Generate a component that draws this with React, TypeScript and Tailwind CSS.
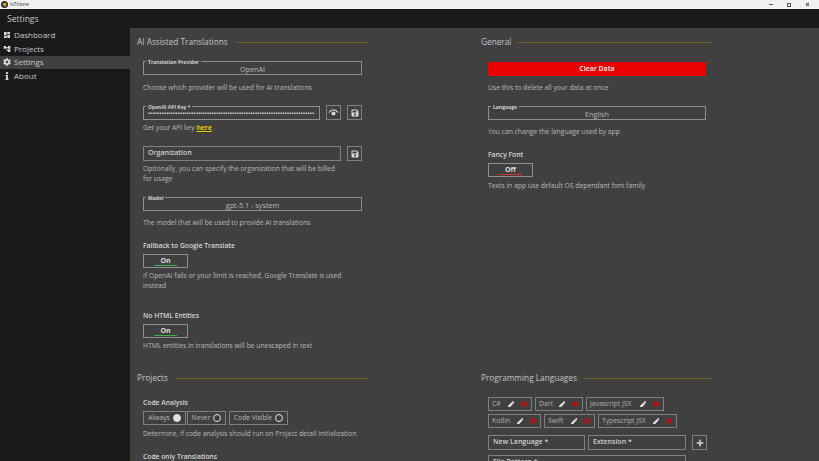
import React from "react";
import { FaCog, FaInfo, FaPen, FaPlus, FaSave, FaTimes } from "react-icons/fa";
import { MdAccountTree, MdDashboard } from "react-icons/md";

const font = "font-['Open_Sans',sans-serif]";

const SideItem = ({ icon, label, active }: { icon: React.ReactNode; label: string; active?: boolean }) => (
  <div className={`flex h-[13.75px] items-center gap-[3px] pl-[3px] text-[8px] text-[#c8c8c8] ${active ? "bg-[#404040]" : ""}`}>
    <span className="flex w-[8px] justify-center text-[8px] text-[#d8d8d8]">{icon}</span>
    {label}
  </div>
);

const SectionTitle = ({ title }: { title: string }) => (
  <div className="flex h-[14px] w-[232px] items-center gap-[7px]">
    <span className="whitespace-nowrap text-[8.25px] text-[#c4c4c4]">{title}</span>
    <span className="h-px flex-1 bg-[#6f5f20]" />
  </div>
);

const Hint = ({ children, className = "" }: { children: React.ReactNode; className?: string }) => (
  <p className={`text-[6.75px] leading-[10px] text-[#b8b8b8] ${className}`}>{children}</p>
);

const Heading = ({ children, className = "" }: { children: React.ReactNode; className?: string }) => (
  <p className={`text-[6.75px] font-semibold leading-[10px] text-[#d6d6d6] ${className}`}>{children}</p>
);

const Field = ({ label, value, className = "" }: { label: string; value: React.ReactNode; className?: string }) => (
  <div className={`relative flex h-[14px] items-center justify-center border border-[#8f8f8f] pt-[2px] text-[7.25px] text-[#b8b8b8] ${className}`}>
    <span className="absolute left-[2px] top-[-3px] bg-[#404040] px-[2px] text-[5px] font-bold leading-[6px] text-[#d0d0d0]">
      {label}
    </span>
    {value}
  </div>
);

const IconBtn = ({ children, className = "" }: { children: React.ReactNode; className?: string }) => (
  <div className={`flex h-[15px] w-[15px] items-center justify-center border border-[#808080] text-[8px] text-[#d8d8d8] ${className}`}>
    {children}
  </div>
);

const Toggle = ({ on }: { on?: boolean }) => (
  <div className="relative flex h-[14px] w-[45px] items-center justify-center border border-[#8f8f8f] text-[7px] font-bold text-[#dcdcdc]">
    {on ? "On" : "Off"}
    <span className={`absolute bottom-[1px] left-[10px] h-px w-[23px] ${on ? "bg-[#3fae49]" : "bg-[#e03030]"}`} />
  </div>
);

const Radio = ({ label, on, className = "" }: { label: string; on?: boolean; className?: string }) => (
  <div className={`flex h-[14px] items-center justify-center gap-[3px] border border-[#808080] text-[6.75px] text-[#b8b8b8] ${className}`}>
    {label}
    <span className={`h-[8px] w-[8px] rounded-full border border-[#e0e0e0] ${on ? "bg-[#e0e0e0]" : ""}`} />
  </div>
);

const Chip = ({ label, className = "" }: { label: string; className?: string }) => (
  <div className={`flex h-[14px] items-center justify-between border border-[#808080] px-[3px] text-[6.75px] text-[#b0b0b0] ${className}`}>
    <span className="whitespace-nowrap">{label}</span>
    <span className="flex items-center gap-[6px]">
      <FaPen className="text-[6.5px] text-[#e0e0e0]" />
      <FaTimes className="text-[8px] text-[#e00000]" />
    </span>
  </div>
);

const TextInput = ({ label, className = "" }: { label: string; className?: string }) => (
  <div className={`flex h-[15px] items-center border border-[#808080] pl-[4px] text-[7px] font-semibold text-[#d0d0d0] ${className}`}>
    {label}
  </div>
);

const App = () => {
  return (
    <div className={`flex h-[461px] w-[819px] flex-col overflow-hidden bg-[#1a1a1a] ${font}`}>
      <div className="flex h-[9px] items-center justify-between bg-[#f1f1f1]">
        <div className="flex items-center gap-[2px] pl-[1px]">
          <svg width="7" height="7" viewBox="0 0 7 7">
            <circle cx="3.5" cy="3.5" r="3.5" fill="#2a2a2a" />
            <path d="M1.5 2.5 L5.5 1.5 L5 5.5 L2.5 5 Z" fill="#c9a227" />
          </svg>
          <span className="text-[5px] leading-[9px] text-[#333333]">IsTrione</span>
        </div>
        <div className="flex items-center gap-[14px] pr-[9px]">
          <span className="h-px w-[4px] bg-[#555555]" />
          <span className="h-[4px] w-[4px] border border-[#555555]" />
          <FaTimes className="text-[5px] text-[#555555]" />
        </div>
      </div>

      <div className="flex h-[19px] items-center pl-[7px] pt-[2px] text-[8.5px] text-[#c8c8c8]">Settings</div>

      <div className="flex flex-1 overflow-hidden">
        <nav className="w-[130px] shrink-0">
          <SideItem icon={<MdDashboard />} label="Dashboard" />
          <SideItem icon={<MdAccountTree />} label="Projects" />
          <SideItem icon={<FaCog />} label="Settings" active />
          <SideItem icon={<FaInfo />} label="About" />
        </nav>

        <main className="grid flex-1 grid-cols-[344px_1fr] grid-rows-[336px_1fr] bg-[#404040] pl-[7px] pt-[7px]">
          <section>
            <SectionTitle title="AI Assisted Translations" />
            <div className="box-content w-[219px] pl-[6px] pt-[12px]">
              <Field label="Translation Provider" value="OpenAI" />
              <Hint className="mt-[8px]">Choose which provider will be used for AI translations</Hint>

              <div className="mt-[12px] flex items-center">
                <Field
                  label="OpenAI API Key *"
                  className="w-[178px] justify-start pl-[4px]"
                  value={<span className="overflow-hidden whitespace-nowrap text-[5px] font-bold tracking-[0.4px] text-[#d8d8d8]">{"•".repeat(73)}</span>}
                />
                <IconBtn className="ml-[6px]">
                  <svg width="11" height="9" viewBox="0 0 11 9" fill="none">
                    <path d="M1 4.5 C3.5 0.8 7.5 0.8 10 4.5" stroke="#d8d8d8" strokeWidth="1.2" />
                    <circle cx="5.5" cy="5.5" r="2" fill="#d8d8d8" />
                  </svg>
                </IconBtn>
                <IconBtn className="ml-[6px]"><FaSave /></IconBtn>
              </div>
              <Hint className="mt-[3px]">
                Get your API key <span className="font-bold text-[#e6c800] underline">here</span>
              </Hint>

              <div className="mt-[13px] flex items-center justify-between">
                <TextInput label="Organization" className="w-[198px]" />
                <IconBtn><FaSave /></IconBtn>
              </div>
              <Hint className="mt-[3px] w-[198px]">Optionally, you can specify the organization that will be billed for usage</Hint>

              <Field label="Model" value="gpt-5.1 - system" className="mt-[13px]" />
              <Hint className="mt-[7px]">The model that will be used to provide AI translations</Hint>

              <Heading className="mt-[13px]">Fallback to Google Translate</Heading>
              <div className="mt-[3px]"><Toggle on /></div>
              <Hint className="mt-[3px]">If OpenAI fails or your limit is reached, Google Translate is used instead</Hint>

              <Heading className="mt-[20px]">No HTML Entities</Heading>
              <div className="mt-[3px]"><Toggle on /></div>
              <Hint className="mt-[3px]">HTML entities in translations will be unescaped in text</Hint>
            </div>
          </section>

          <section>
            <SectionTitle title="General" />
            <div className="box-content w-[218px] pl-[7px] pt-[13px]">
              <div className="flex h-[14px] items-center justify-center bg-[#e80000] text-[6.75px] font-bold text-[#f0d8d8]">Clear Data</div>
              <Hint className="mt-[7px]">Use this to delete all your data at once</Hint>
              <Field label="Language" value="English" className="mt-[13px]" />
              <Hint className="mt-[7px]">You can change the language used by app</Hint>
              <Heading className="mt-[13px]">Fancy Font</Heading>
              <div className="mt-[3px]"><Toggle /></div>
              <Hint className="mt-[4px]">Texts in app use default OS dependant font family</Hint>
            </div>
          </section>

          <section>
            <SectionTitle title="Projects" />
            <div className="pl-[6px] pt-[13px]">
              <Heading>Code Analysis</Heading>
              <div className="mt-[3px] flex">
                <Radio label="Always" on className="w-[43px]" />
                <Radio label="Never" className="ml-[1px] w-[39px]" />
                <Radio label="Code Visible" className="ml-[3px] w-[59px]" />
              </div>
              <Hint className="mt-[4px]">Determine, if code analysis should run on Project detail initialization</Hint>
              <Heading className="mt-[13px]">Code only Translations</Heading>
            </div>
          </section>

          <section>
            <SectionTitle title="Programming Languages" />
            <div className="flex flex-col pl-[7px] pt-[12px]">
              <div className="flex gap-[3px]">
                <Chip label="C#" className="w-[44px]" />
                <Chip label="Dart" className="w-[48px]" />
                <Chip label="Javascript JSX" className="w-[78px]" />
              </div>
              <div className="mt-[3px] flex gap-[3px]">
                <Chip label="Kotlin" className="w-[53px]" />
                <Chip label="Swift" className="w-[51px]" />
                <Chip label="Typescript JSX" className="w-[79px]" />
              </div>
              <div className="mt-[7px] flex items-center gap-[3px]">
                <TextInput label="New Language *" className="w-[97px]" />
                <TextInput label="Extension *" className="w-[98px]" />
                <IconBtn className="ml-[3px]"><FaPlus /></IconBtn>
              </div>
              <TextInput label="File Pattern *" className="mt-[5px] w-[198px]" />
            </div>
          </section>
        </main>
      </div>
    </div>
  );
};

export default App;
